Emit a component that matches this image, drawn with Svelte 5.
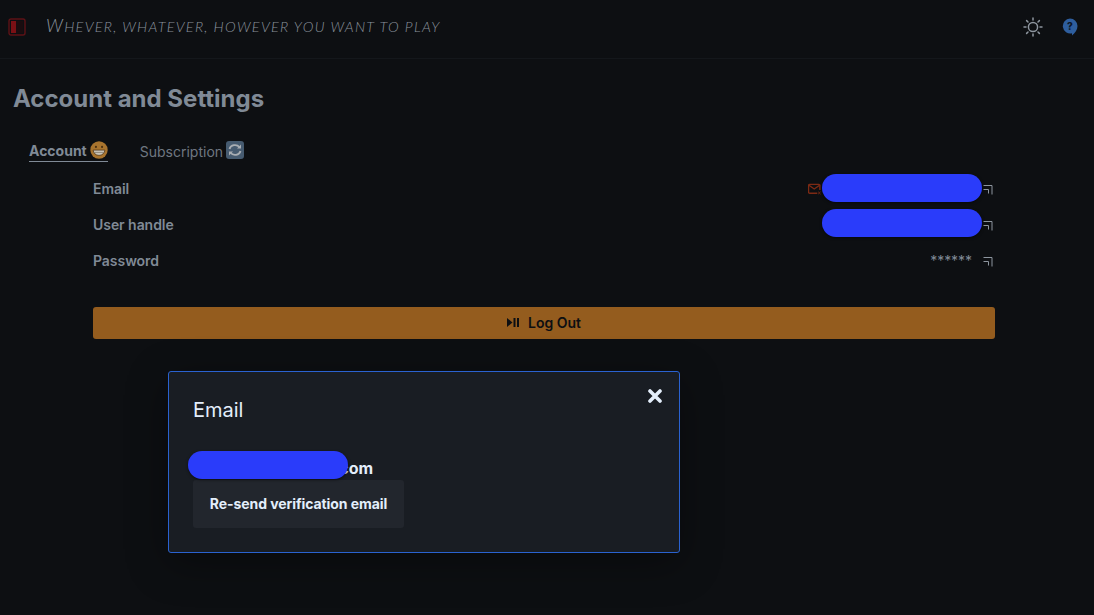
<script>
  const rows = [
    { label: "Email", redacted: true, warn: true },
    { label: "User handle", redacted: true },
    { label: "Password", value: "******" }
  ];
</script>

<div class="page">
  <header class="topbar">
    <button class="icon-btn" aria-label="Toggle sidebar">
      <svg width="18" height="18" viewBox="0 0 18 18">
        <rect x="1" y="1" width="16" height="16" rx="2" fill="none" stroke="#5e1216" stroke-width="1.4" />
        <rect x="3" y="3" width="5" height="12" fill="#7a1015" />
        <rect x="8" y="3" width="7" height="12" fill="#1a0c0f" />
      </svg>
    </button>
    <span class="tagline">Whever, whatever, however you want to play</span>
    <div class="topbar-right">
      <svg class="sun" width="20" height="20" viewBox="0 0 20 20" fill="none" stroke="#8d959e" stroke-width="1.5" stroke-linecap="round">
        <circle cx="10" cy="10" r="4.6" />
        <path d="M10 1v2M10 17v2M1 10h2M17 10h2M3.6 3.6 5 5M15 15l1.4 1.4M3.6 16.4 5 15M15 5l1.4-1.4" />
      </svg>
      <svg class="help" width="16" height="18" viewBox="0 0 16 18">
        <path d="M8 .5a7.5 7.5 0 0 1 7.500 7.500c0 4-2.500 7-5.500 9.500v-2.200A7.500 7.500 0 1 1 8 .5z" fill="#2e5e9e" />
        <text x="8" y="11.500" text-anchor="middle" class="help-mark">?</text>
      </svg>
    </div>
  </header>

  <main class="content">
    <h1>Account and Settings</h1>

    <nav class="tabs">
      <span class="tab active">
        Account
        <svg class="emoji" width="18" height="18" viewBox="0 0 17 17">
          <circle cx="8.500" cy="8.500" r="8.200" fill="#a8742e" />
          <circle cx="5.600" cy="5.600" r="1" fill="#4a3010" />
          <circle cx="11.400" cy="5.600" r="1" fill="#4a3010" />
          <path d="M3 8.600h11a5.500 5 0 0 1-11 0z" fill="#c9c4b8" stroke="#4a3010" stroke-width=".7" />
          <path d="M3.300 10.800h10.400" stroke="#7d7668" stroke-width=".7" />
        </svg>
      </span>
      <span class="tab">
        Subscription
        <svg class="emoji" width="18" height="18" viewBox="0 0 18 18">
          <rect width="18" height="18" rx="3" fill="#465b70" />
          <path d="M3.500 8a5.600 5 0 0 1 10-1.800M14.500 10a5.600 5 0 0 1-10 1.800" fill="none" stroke="#a9aeb3" stroke-width="1.800" />
          <path d="M15 3.500v4h-4zM3 14.500v-4h4z" fill="#a9aeb3" />
        </svg>
      </span>
    </nav>

    <section class="panel">
      {#each rows as row}
        <div class="row">
          <span class="label">{row.label}</span>
          <div class="value">
            {#if row.warn}
              <svg class="mail" width="13" height="12" viewBox="0 0 14 12" fill="none" stroke="#7d2a14" stroke-width="1.500">
                <path d="M10 10.500H1.600a1 1 0 0 1-1-1V2a1 1 0 0 1 1-1h10.200a1 1 0 0 1 1 1v5" />
                <path d="M1 2l5.700 4L12.500 2" />
                <path d="M11 9l2.500 2.500M13.500 9 11 11.500" stroke-width="1" />
              </svg>
            {/if}
            {#if row.redacted}
              <span class="blob"></span>
            {:else}
              <span class="stars">{row.value}</span>
            {/if}
            <svg class="edit" width="10" height="10" viewBox="0 0 10 10" fill="none" stroke="#8d959e" stroke-width="1">
              <path d="M.5 .5h8.500v9M.5 4.500h5v4" />
            </svg>
          </div>
        </div>
      {/each}

      <button class="logout">
        <svg width="12" height="9" viewBox="0 0 12 9" fill="#0d0f12">
          <path d="M0 0l5.500 4.500L0 9z" />
          <rect x="6.500" y="0" width="2" height="9" />
          <rect x="10" y="0" width="2" height="9" />
        </svg>
        Log Out
      </button>
    </section>
  </main>

  <div class="modal">
    <button class="close" aria-label="Close">
      <svg width="14" height="14" viewBox="0 0 14 14" stroke="#e3eefb" stroke-width="3.600" stroke-linecap="round">
        <path d="M2 2l10 10M12 2 2 12" />
      </svg>
    </button>
    <h2>Email</h2>
    <p class="address"><span class="blob over"></span>.com</p>
    <button class="resend">Re-send verification email</button>
  </div>
</div>

<style>
  :global(body) {
    margin: 0;
    background: #0d0f12;
  }

  .page {
    position: relative;
    width: 1094px;
    height: 615px;
    overflow: hidden;
    font-family: Inter, "Liberation Sans", sans-serif;
    color: #8d959e;
  }

  .topbar {
    display: flex;
    align-items: center;
    height: 59px;
    padding: 0 16px 0 8px;
    box-sizing: border-box;
    border-bottom: 1px solid #14171b;
  }

  .icon-btn {
    display: flex;
    padding: 0;
    border: 0;
    background: none;
    margin-top: -4px;
  }

  .tagline {
    display: block;
    margin-left: 20px;
    margin-top: -6px;
    font-family: Lato, sans-serif;
    font-style: italic;
    font-weight: 300;
    text-transform: uppercase;
    font-size: 14.5px;
    line-height: 20px;
    letter-spacing: 1.27px;
    color: #8a929c;
  }

  .tagline::first-letter {
    font-size: 18px;
  }

  .topbar-right {
    margin-left: auto;
    display: flex;
    align-items: center;
    gap: 19px;
    margin-top: -4px;
  }

  .help-mark {
    font-family: Inter, sans-serif;
    font-size: 10px;
    font-weight: 800;
    fill: #0d1626;
  }

  .content {
    padding: 0 13px;
  }

  h1 {
    margin: 25px 0 0;
    font-size: 24px;
    line-height: 30px;
    font-weight: 700;
    color: #808a96;
  }

  .tabs {
    display: flex;
    gap: 32px;
    margin: 26px 0 0 16px;
  }

  .tab {
    display: flex;
    align-items: center;
    gap: 3px;
    height: 22px;
    font-size: 14px;
    color: #6f7781;
    box-sizing: border-box;
  }

  .tab.active {
    font-weight: 700;
    color: #808a96;
    border-bottom: 1px solid #808a96;
  }

  .emoji {
    margin-top: -2px;
  }

  .panel {
    margin: 8px 0 0 80px;
    width: 902px;
  }

  .row {
    display: flex;
    justify-content: space-between;
    align-items: center;
    height: 36px;
    font-size: 14px;
    font-weight: 600;
    letter-spacing: -0.05px;
    color: #808a96;
  }

  .row:nth-child(2) .blob {
    margin-top: -2px;
  }

  .value {
    display: flex;
    align-items: center;
    margin-right: 2px;
  }

  .blob {
    display: block;
    width: 160px;
    height: 28px;
    border-radius: 14px;
    background: #2a3cfa;
    box-shadow: 0 1px 3px rgba(0, 0, 0, 0.5);
  }

  .mail {
    margin-right: 1px;
    margin-top: 1px;
  }

  .edit {
    margin-left: 1px;
    margin-top: 3px;
  }

  .stars {
    margin-right: 10px;
    font-weight: 400;
    font-size: 14px;
    color: #808a96;
  }

  .logout {
    display: flex;
    align-items: center;
    justify-content: center;
    gap: 9px;
    width: 100%;
    height: 32px;
    margin-top: 29px;
    padding: 0 0 1px;
    border: 0;
    border-radius: 3px;
    background: #945c1e;
    font: 600 14px Inter, sans-serif;
    color: #0d0f12;
  }

  .modal {
    position: absolute;
    left: 168px;
    top: 371px;
    width: 512px;
    height: 182px;
    box-sizing: border-box;
    padding: 24px;
    border: 1px solid #2a62d0;
    border-radius: 3px;
    background: #191d23;
    box-shadow: 0 10px 40px rgba(0, 0, 0, 0.35);
    color: #e3eefb;
  }

  .close {
    position: absolute;
    top: 17px;
    right: 17px;
    display: flex;
    padding: 0;
    border: 0;
    background: none;
  }

  h2 {
    margin: 0;
    font-size: 20px;
    line-height: 28px;
    font-weight: 400;
  }

  .address {
    position: relative;
    margin: 32px 0 0;
    height: 24px;
    padding-left: 141px;
    font-size: 16px;
    line-height: 24px;
    font-weight: 700;
  }

  .blob.over {
    position: absolute;
    left: -5px;
    top: -5px;
  }

  .resend {
    display: block;
    width: 211px;
    height: 48px;
    padding: 0 0 2px;
    border: 0;
    border-radius: 3px;
    background: #22262d;
    font: 700 14px Inter, sans-serif;
    letter-spacing: -0.08px;
    color: #e3eefb;
  }
</style>
